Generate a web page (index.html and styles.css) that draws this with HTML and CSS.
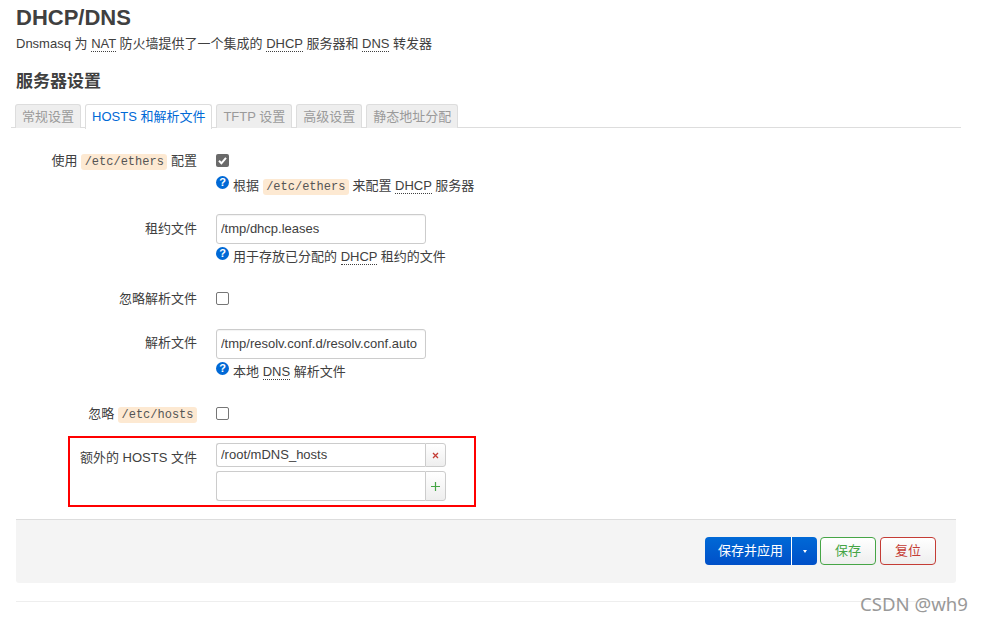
FILE: index.html
```html
<!DOCTYPE html>
<html lang="zh">
<head>
<meta charset="utf-8">
<title>DHCP/DNS</title>
<link rel="stylesheet" href="styles.css">
</head>
<body>
<main class="page">
  <h2 class="title">DHCP/DNS</h2>
  <p class="desc">Dnsmasq 为 <abbr>NAT</abbr> 防火墙提供了一个集成的 <abbr>DHCP</abbr> 服务器和 <abbr>DNS</abbr> 转发器</p>
  <h3 class="section">服务器设置</h3>
  <ul class="tabs">
    <li class="tab">常规设置</li>
    <li class="tab active">HOSTS 和解析文件</li>
    <li class="tab">TFTP 设置</li>
    <li class="tab">高级设置</li>
    <li class="tab">静态地址分配</li>
  </ul>
  <section class="form">
    <div class="row r1">
      <label class="lbl">使用 <code>/etc/ethers</code> 配置</label>
      <div class="field">
        <span class="check checked"><svg viewBox="0 0 13 13" width="13" height="13"><path d="M3 6.8 5.4 9.3 10 3.8" fill="none" stroke="#fff" stroke-width="2"/></svg></span>
        <div class="help help-check"><svg class="q" viewBox="0 0 13 13" width="13" height="13"><circle cx="6.5" cy="6.5" r="6.5" fill="#0069d6"/><text x="6.5" y="10.2" text-anchor="middle" class="qt">?</text></svg>根据 <code>/etc/ethers</code> 来配置 <abbr>DHCP</abbr> 服务器</div>
      </div>
    </div>
    <div class="row r2">
      <label class="lbl">租约文件</label>
      <div class="field">
        <input class="input" value="/tmp/dhcp.leases">
        <div class="help"><svg class="q" viewBox="0 0 13 13" width="13" height="13"><circle cx="6.5" cy="6.5" r="6.5" fill="#0069d6"/><text x="6.5" y="10.2" text-anchor="middle" class="qt">?</text></svg>用于存放已分配的 <abbr>DHCP</abbr> 租约的文件</div>
      </div>
    </div>
    <div class="row r3">
      <label class="lbl">忽略解析文件</label>
      <div class="field"><span class="check"></span></div>
    </div>
    <div class="row r4">
      <label class="lbl">解析文件</label>
      <div class="field">
        <input class="input" value="/tmp/resolv.conf.d/resolv.conf.auto">
        <div class="help"><svg class="q" viewBox="0 0 13 13" width="13" height="13"><circle cx="6.5" cy="6.5" r="6.5" fill="#0069d6"/><text x="6.5" y="10.2" text-anchor="middle" class="qt">?</text></svg>本地 <abbr>DNS</abbr> 解析文件</div>
      </div>
    </div>
    <div class="row r5">
      <label class="lbl">忽略 <code>/etc/hosts</code></label>
      <div class="field"><span class="check"></span></div>
    </div>
    <div class="row r6">
      <div class="mark"></div>
      <label class="lbl">额外的 HOSTS 文件</label>
      <div class="field">
        <div class="dyn first"><input class="dyn-input" value="/root/mDNS_hosts"><span class="dyn-btn rm"><svg viewBox="0 0 7 7" width="7" height="7"><path d="M1 1 6 6M6 1 1 6" stroke="#c43c35" stroke-width="1.3"/></svg></span></div>
        <div class="dyn second"><input class="dyn-input" value=""><span class="dyn-btn add"><svg viewBox="0 0 9 9" width="9" height="9"><path d="M4.5 0V9M0 4.5H9" stroke="#46a546" stroke-width="1.2"/></svg></span></div>
      </div>
    </div>
  </section>
  <footer class="actions">
    <div class="split">
      <span class="split-main">保存并应用</span>
      <span class="split-caret"><i class="caret"></i></span>
    </div>
    <button class="btn save">保存</button>
    <button class="btn reset">复位</button>
  </footer>
  <div class="rule"></div>
</main>
<div class="watermark">CSDN @wh9</div>
</body>
</html>
```
FILE: styles.css
```css
* { box-sizing: border-box; }
html, body { margin: 0; padding: 0; }
body {
  width: 984px;
  height: 622px;
  overflow: hidden;
  background: #fff;
  color: #404040;
  font-family: "Liberation Sans", "Noto Sans CJK SC", sans-serif;
  font-size: 13px;
  line-height: 18px;
  position: relative;
}
.page { padding: 0 0 0 16px; width: 961px; }
.title {
  margin: 0;
  padding-top: 5px;
  height: 35px;
  font-size: 22px;
  line-height: 26px;
  font-weight: bold;
}
.desc { margin: 0; height: 18px; line-height: 18px; font-size: 13px; }
abbr { border-bottom: 1px dotted #404040; text-decoration: none; }
.section {
  margin: 17px 0 0;
  height: 23px;
  font-size: 17px;
  line-height: 23px;
  font-weight: bold;
}
.tabs {
  list-style: none;
  margin: 11px 0 0 -5px;
  padding: 0 0 0 4px;
  height: 24px;
  display: flex;
  gap: 4px;
  border-bottom: 1px solid #ddd;
  width: 950px;
}
.tab {
  height: 24px;
  padding: 0 6px;
  font-size: 13px;
  line-height: 24px;
  color: #9a9a9a;
  background: #eee;
  border: 1px solid #ddd;
  border-bottom: 0;
  border-radius: 3px 3px 0 0;
  white-space: nowrap;
}
.tab.active {
  color: #0069d6;
  background: #fff;
  border-color: #ddd;
  height: 25px;
  position: relative;
}
.form { width: 945px; }
.row { display: flex; align-items: flex-start; position: relative; }
.lbl {
  flex: 0 0 181px;
  text-align: right;
  white-space: nowrap;
  line-height: 20px;
  font-size: 13px;
}
.field { margin-left: 19px; flex: 1; }
code {
  display: inline-block;
  font-family: "Liberation Mono", monospace;
  font-size: 12px;
  line-height: 16px;
  padding: 0 3.5px;
  background: #fde9d2;
  border-radius: 3px;
  color: #555;
}
.check {
  display: block;
  width: 13px;
  height: 13px;
  border: 1px solid #767676;
  border-radius: 2px;
  background: #fff;
}
.check.checked { background: #6a6a6a; border: 0; }
.check svg { display: block; }
.help { height: 18px; line-height: 18px; margin-top: 4px; white-space: nowrap; font-size: 13px; }
.help-check { margin-top: 10px; }
.q { vertical-align: -1px; margin-right: 4px; position: relative; top: -2px; }
.qt { fill: #fff; font: bold 11px "Liberation Sans", sans-serif; }
.input {
  display: block;
  width: 210px;
  height: 30px;
  padding: 0 4px 2px;
  border: 1px solid #ccc;
  border-radius: 3px;
  font: 13px "Liberation Sans", sans-serif;
  color: #404040;
  outline: 0;
  box-shadow: inset 0 1px 1px rgba(0,0,0,.05);
}
.r1 { margin-top: 22px; height: 64px; }
.r1 .lbl { padding-top: 1px; }
.r1 .field { padding-top: 4px; }
.r2 { height: 75px; }
.r2 .lbl { padding-top: 5px; }
.r3 { height: 40px; }
.r3 .field { padding-top: 3px; }
.r4 { height: 75px; }
.r4 .lbl { padding-top: 4px; }
.r5 { height: 32px; }
.r5 .field { padding-top: 3px; }
.r6 { height: 83px; }
.r6 .lbl { padding-top: 12px; }
.r6 .field { padding-top: 7px; }
.mark {
  position: absolute;
  left: 52px;
  top: 0;
  width: 408px;
  height: 71px;
  border: 2px solid #f00;
  pointer-events: none;
}
.dyn { display: flex; width: 230px; }
.first { height: 24px; }
.second { height: 30px; margin-top: 4px; }
.dyn-input {
  flex: 1;
  min-width: 0;
  height: 100%;
  padding: 0 4px 2px;
  border: 1px solid #ccc;
  border-right: 0;
  border-radius: 3px 0 0 3px;
  font: 13px "Liberation Sans", sans-serif;
  color: #404040;
  outline: 0;
}
.dyn-btn {
  flex: 0 0 21px;
  display: flex;
  align-items: center;
  justify-content: center;
  border: 1px solid #ccc;
  border-radius: 0 3px 3px 0;
  background: linear-gradient(#fff, #eee);
}
.actions {
  width: 940px;
  height: 64px;
  background: #f4f4f4;
  border-top: 1px solid #ddd;
  border-radius: 0 0 3px 3px;
  display: flex;
  justify-content: flex-end;
  align-items: flex-start;
  gap: 3px;
  padding: 17px 20px 0 0;
}
.split {
  display: flex;
  height: 28px;
  width: 112px;
  background: linear-gradient(#0069d6, #0050c8);
  border-radius: 4px;
  color: #fff;
}
.split-main { flex: 1; text-align: center; line-height: 27px; padding-left: 5px; }
.split-caret {
  flex: 0 0 26px;
  border-left: 1px solid #fff;
  display: flex;
  align-items: center;
  justify-content: center;
}
.caret {
  width: 0;
  height: 0;
  border: 2.5px solid transparent;
  border-top: 3px solid #fff;
  border-bottom: 0;
}
.btn {
  width: 56px;
  height: 28px;
  padding: 0 0 3px;
  background: linear-gradient(#fff, #eee);
  border-radius: 4px;
  font: 13px "Liberation Sans", "Noto Sans CJK SC", sans-serif;
}
.save { border: 1px solid #46a546; color: #46a546; }
.reset { border: 1px solid #c43c35; color: #c43c35; margin-left: 1px; }
.rule { width: 940px; height: 1px; background: #eee; margin-top: 18px; }
.watermark {
  position: absolute;
  left: 860px;
  top: 593px;
  font-size: 18.6px;
  line-height: 22px;
  color: #999;
  font-family: "Noto Sans", sans-serif;
  white-space: nowrap;
}
```
